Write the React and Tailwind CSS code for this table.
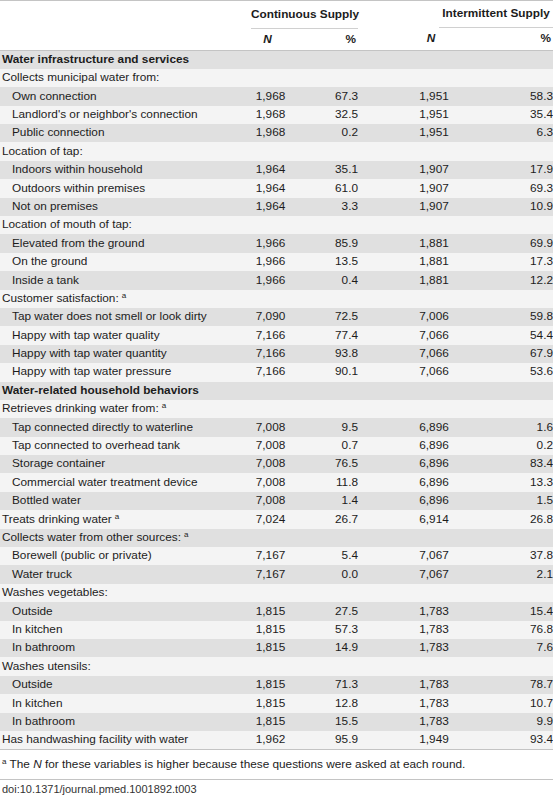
import React from "react";

// Table rows: section = bold band, group = sub heading, item = data row
const rows = [
  { type: "section", label: "Water infrastructure and services" },
  { type: "group", label: "Collects municipal water from:" },
  { type: "item", label: "Own connection", v: ["1,968", "67.3", "1,951", "58.3"] },
  { type: "item", label: "Landlord's or neighbor's connection", v: ["1,968", "32.5", "1,951", "35.4"] },
  { type: "item", label: "Public connection", v: ["1,968", "0.2", "1,951", "6.3"] },
  { type: "group", label: "Location of tap:" },
  { type: "item", label: "Indoors within household", v: ["1,964", "35.1", "1,907", "17.9"] },
  { type: "item", label: "Outdoors within premises", v: ["1,964", "61.0", "1,907", "69.3"] },
  { type: "item", label: "Not on premises", v: ["1,964", "3.3", "1,907", "10.9"] },
  { type: "group", label: "Location of mouth of tap:" },
  { type: "item", label: "Elevated from the ground", v: ["1,966", "85.9", "1,881", "69.9"] },
  { type: "item", label: "On the ground", v: ["1,966", "13.5", "1,881", "17.3"] },
  { type: "item", label: "Inside a tank", v: ["1,966", "0.4", "1,881", "12.2"] },
  { type: "group", label: "Customer satisfaction:", sup: true },
  { type: "item", label: "Tap water does not smell or look dirty", v: ["7,090", "72.5", "7,006", "59.8"] },
  { type: "item", label: "Happy with tap water quality", v: ["7,166", "77.4", "7,066", "54.4"] },
  { type: "item", label: "Happy with tap water quantity", v: ["7,166", "93.8", "7,066", "67.9"] },
  { type: "item", label: "Happy with tap water pressure", v: ["7,166", "90.1", "7,066", "53.6"] },
  { type: "section", label: "Water-related household behaviors" },
  { type: "group", label: "Retrieves drinking water from:", sup: true },
  { type: "item", label: "Tap connected directly to waterline", v: ["7,008", "9.5", "6,896", "1.6"] },
  { type: "item", label: "Tap connected to overhead tank", v: ["7,008", "0.7", "6,896", "0.2"] },
  { type: "item", label: "Storage container", v: ["7,008", "76.5", "6,896", "83.4"] },
  { type: "item", label: "Commercial water treatment device", v: ["7,008", "11.8", "6,896", "13.3"] },
  { type: "item", label: "Bottled water", v: ["7,008", "1.4", "6,896", "1.5"] },
  { type: "group", label: "Treats drinking water", sup: true, v: ["7,024", "26.7", "6,914", "26.8"] },
  { type: "group", label: "Collects water from other sources:", sup: true },
  { type: "item", label: "Borewell (public or private)", v: ["7,167", "5.4", "7,067", "37.8"] },
  { type: "item", label: "Water truck", v: ["7,167", "0.0", "7,067", "2.1"] },
  { type: "group", label: "Washes vegetables:" },
  { type: "item", label: "Outside", v: ["1,815", "27.5", "1,783", "15.4"] },
  { type: "item", label: "In kitchen", v: ["1,815", "57.3", "1,783", "76.8"] },
  { type: "item", label: "In bathroom", v: ["1,815", "14.9", "1,783", "7.6"] },
  { type: "group", label: "Washes utensils:" },
  { type: "item", label: "Outside", v: ["1,815", "71.3", "1,783", "78.7"] },
  { type: "item", label: "In kitchen", v: ["1,815", "12.8", "1,783", "10.7"] },
  { type: "item", label: "In bathroom", v: ["1,815", "15.5", "1,783", "9.9"] },
  { type: "group", label: "Has handwashing facility with water", v: ["1,962", "95.9", "1,949", "93.4"] },
];

function App() {
  return (
    <div className="w-[553px] h-[800px] bg-white text-[#1c1c1c] text-[11.8px] font-['Liberation_Sans',Arial,sans-serif]">
      <table className="w-[553px] table-fixed border-collapse border-t border-b border-[#c4c4c4]">
        <colgroup>
          <col className="w-[251px]" />
          <col className="w-[39px]" />
          <col className="w-[68px]" />
          <col className="w-[58px]" />
          <col className="w-[36px]" />
          <col className="w-[101px]" />
        </colgroup>
        <thead>
          <tr className="h-[28px]">
            <th></th>
            <th colSpan={2} className="p-0 font-bold text-center whitespace-nowrap border-b border-[#d0d0d0]">Continuous Supply</th>
            <th></th>
            <th colSpan={2} className="p-0 font-bold whitespace-nowrap">
              <div className="ml-[23px] h-[27px] flex items-center justify-center border-b border-[#d0d0d0]">Intermittent Supply</div>
            </th>
          </tr>
          <tr className="h-[22px] border-b border-[#c4c4c4]">
            <th></th>
            <th className="p-0 pr-[6px] text-center font-bold italic">N</th>
            <th className="p-0 pr-[2px] text-right font-bold">%</th>
            <th></th>
            <th className="p-0 pr-[6px] text-center font-bold italic">N</th>
            <th className="p-0 pr-[2px] text-right font-bold">%</th>
          </tr>
        </thead>
        <tbody>
          {rows.map((r, i) => (
            <tr key={i} className={i % 2 === 0 ? "h-[18.4px] bg-[#e0e0e0]" : "h-[18.4px] bg-[#f4f4f4]"}>
              <td className={r.type === "item" ? "p-0 pl-[12px] whitespace-nowrap" : r.type === "section" ? "p-0 pl-[2px] font-bold whitespace-nowrap" : "p-0 pl-[2px] whitespace-nowrap"}>
                {r.label}
                {r.sup && <sup className="text-[8px] ml-[3px]">a</sup>}
              </td>
              <td className="p-0 text-center">{r.v ? r.v[0] : ""}</td>
              <td className="p-0 text-right">{r.v ? r.v[1] : ""}</td>
              <td className="p-0"></td>
              <td className="p-0 text-center">{r.v ? r.v[2] : ""}</td>
              <td className="p-0 text-right">{r.v ? r.v[3] : ""}</td>
            </tr>
          ))}
        </tbody>
      </table>
      <p className="pt-[6px] pb-[5px] pl-[2px] border-b border-[#c4c4c4]">
        <sup className="text-[8px]">a</sup> The <i>N</i> for these variables is higher because these questions were asked at each round.
      </p>
      <p className="pt-[1px] pl-[2px] text-[11px] text-[#333]">doi:10.1371/journal.pmed.1001892.t003</p>
    </div>
  );
}

export default App;
